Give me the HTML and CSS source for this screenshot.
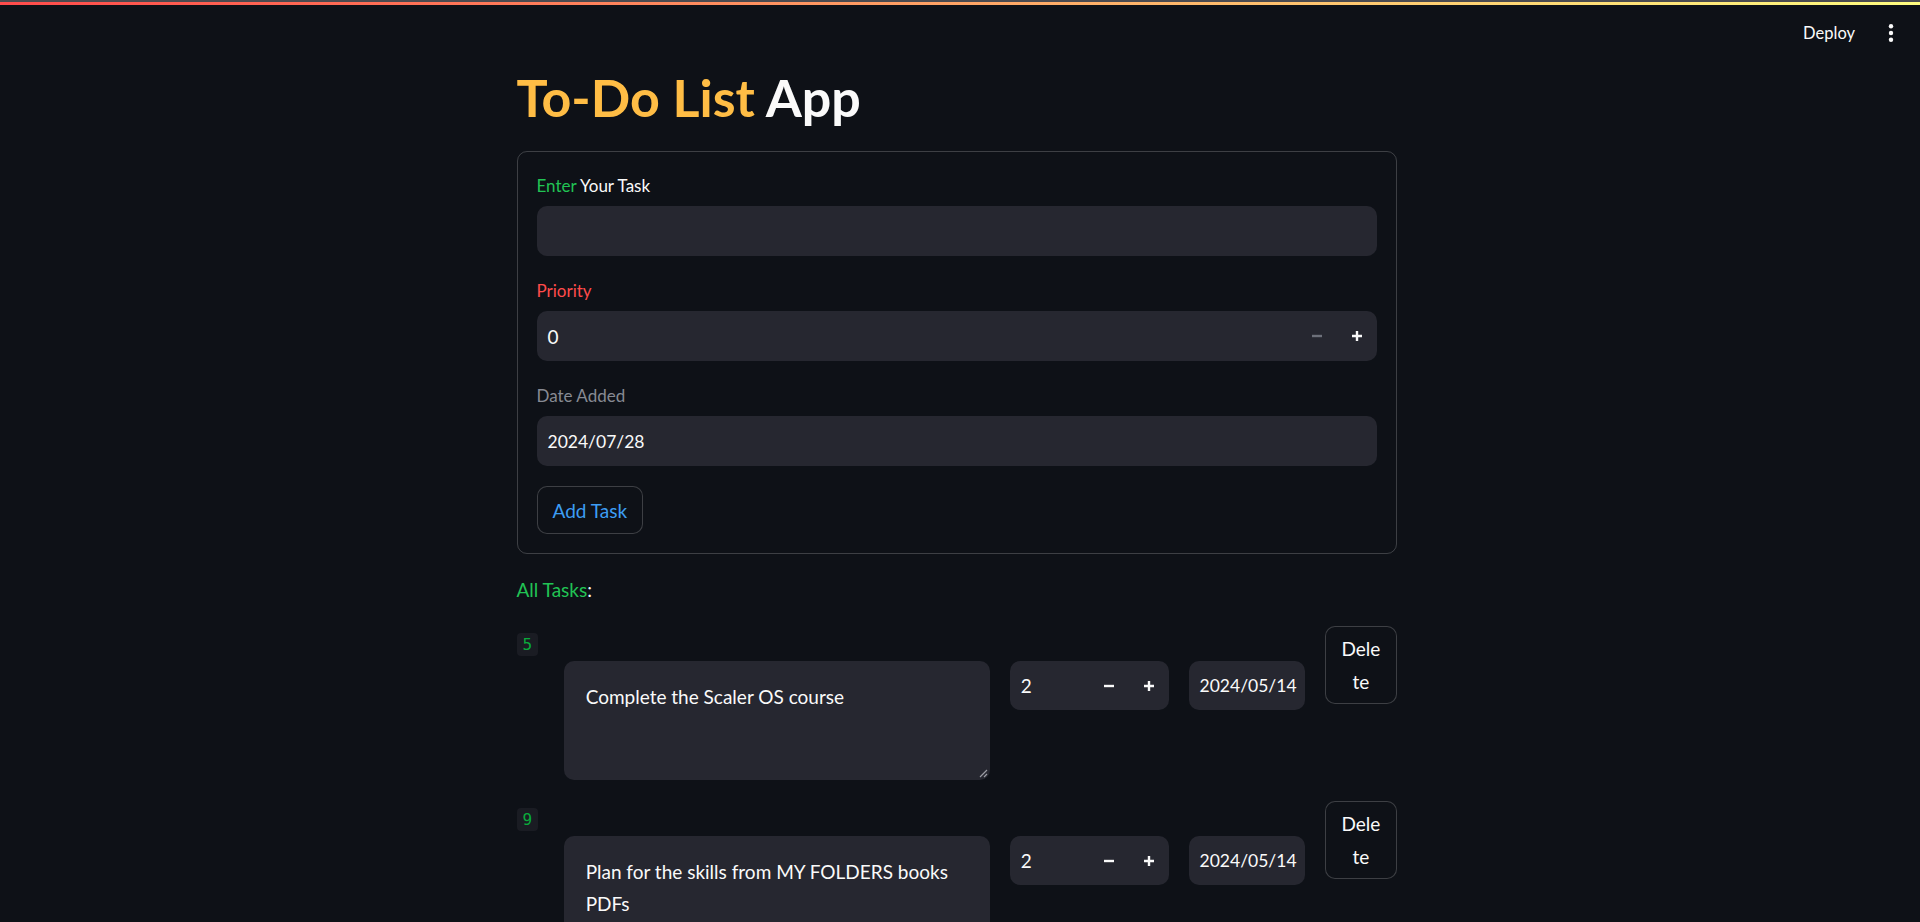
FILE: index.html
```html
<!DOCTYPE html>
<html lang="en">
<head>
<meta charset="utf-8">
<title>To-Do List App</title>
<link rel="stylesheet" href="styles.css">
</head>
<body>
<div class="decoration"></div>
<header class="topbar">
  <span class="deploy">Deploy</span>
  <svg class="menu" width="6" height="20" viewBox="0 0 6 20" aria-hidden="true">
    <circle cx="3" cy="3.3" r="2.2"/>
    <circle cx="3" cy="10" r="2.2"/>
    <circle cx="3" cy="16.7" r="2.2"/>
  </svg>
</header>

<div class="page">
<main class="main">
  <h1 class="title"><span class="orange">To-Do List</span> App</h1>

  <section class="form">
    <div class="field">
      <div class="label"><span class="green">Enter</span> Your Task</div>
      <div class="input"></div>
    </div>
    <div class="field">
      <div class="label red">Priority</div>
      <div class="input stepper">
        <span class="value">0</span>
        <span class="step disabled"><svg width="10" height="10" viewBox="0 0 10 10"><path d="M0 5h10"/></svg></span>
        <span class="step"><svg width="10" height="10" viewBox="0 0 10 10"><path d="M0 5h10M5 0v10"/></svg></span>
      </div>
    </div>
    <div class="field">
      <div class="label gray">Date Added</div>
      <div class="input"><span class="value date">2024/07/28</span></div>
    </div>
    <div class="actions">
      <button class="btn blue">Add Task</button>
    </div>
  </section>

  <p class="heading"><span class="green">All Tasks</span>:</p>

  <div class="task-row">
    <div class="cell"><code class="idx">5</code></div>
    <div class="cell">
      <div class="hidden-label"></div>
      <div class="textarea">Complete the Scaler OS course
        <svg class="grip" width="10" height="10" viewBox="0 0 10 10"><path d="M9 2L2 9M9 6L6 9"/></svg>
      </div>
    </div>
    <div class="cell">
      <div class="hidden-label"></div>
      <div class="input stepper small">
        <span class="value">2</span>
        <span class="step"><svg width="10" height="10" viewBox="0 0 10 10"><path d="M0 5h10"/></svg></span>
        <span class="step"><svg width="10" height="10" viewBox="0 0 10 10"><path d="M0 5h10M5 0v10"/></svg></span>
      </div>
    </div>
    <div class="cell">
      <div class="hidden-label"></div>
      <div class="input small"><span class="value date">2024/05/14</span></div>
    </div>
    <div class="cell">
      <button class="btn delete">Dele<wbr>te</button>
    </div>
  </div>

  <div class="task-row">
    <div class="cell"><code class="idx">9</code></div>
    <div class="cell">
      <div class="hidden-label"></div>
      <div class="textarea">Plan for the skills from MY FOLDERS books<br>PDFs
        <svg class="grip" width="10" height="10" viewBox="0 0 10 10"><path d="M9 2L2 9M9 6L6 9"/></svg>
      </div>
    </div>
    <div class="cell">
      <div class="hidden-label"></div>
      <div class="input stepper small">
        <span class="value">2</span>
        <span class="step"><svg width="10" height="10" viewBox="0 0 10 10"><path d="M0 5h10"/></svg></span>
        <span class="step"><svg width="10" height="10" viewBox="0 0 10 10"><path d="M0 5h10M5 0v10"/></svg></span>
      </div>
    </div>
    <div class="cell">
      <div class="hidden-label"></div>
      <div class="input small"><span class="value date">2024/05/14</span></div>
    </div>
    <div class="cell">
      <button class="btn delete">Dele<wbr>te</button>
    </div>
  </div>
</main>
</div>
</body>
</html>
```

FILE: styles.css
```css
* { box-sizing: border-box; }

html, body {
  margin: 0;
  padding: 0;
  height: 100%;
  overflow: hidden;
  background: #0e1117;
  color: #fafafa;
  font-family: Lato, "Open Sans", sans-serif;
}

.decoration {
  height: 5px;
  border-top: 2px solid #4b4b50;
  background: linear-gradient(90deg, #ff4b4b, #fffd80);
}

.topbar {
  height: 56px;
  display: flex;
  justify-content: flex-end;
  align-items: center;
  gap: 33px;
  padding-right: 26px;
}

.deploy {
  font-size: 16.5px;
  color: #fafafa;
}

.menu { fill: #fafafa; }

.page {
  padding-right: 7px;
}

.main {
  width: 880px;
  margin: 0 auto;
}

.title {
  margin: 3px 0 21px;
  font-size: 52px;
  line-height: 66px;
  font-weight: 700;
  color: #fafafa;
}

.orange { color: #ffbd45; }
.green { color: #21c354; }
.red { color: #ff4b4b; }
.gray { color: #878a93; }
.blue { color: #3d9df3; }

.form {
  border: 1px solid rgba(250, 250, 250, 0.2);
  border-radius: 10px;
  padding: 19px;
  display: flex;
  flex-direction: column;
  gap: 20px;
}

.field {
  display: flex;
  flex-direction: column;
}

.label {
  height: 30px;
  line-height: 30px;
  margin-bottom: 5px;
  font-size: 17px;
}

.input {
  height: 50px;
  background: #262730;
  border-radius: 10px;
  display: flex;
  align-items: center;
  padding-left: 11px;
  font-size: 19px;
  color: #fafafa;
}

.input.small { height: 49px; }

.value.date { font-size: 17.5px; }

.stepper .value { flex: 1; }

.step {
  width: 40px;
  height: 100%;
  display: flex;
  align-items: center;
  justify-content: center;
}

.step svg {
  stroke: #fafafa;
  stroke-width: 2.4;
  fill: none;
}

.step.disabled svg { stroke: #6d707a; }

.actions { display: flex; }

.btn {
  font-family: inherit;
  background: #0e1117;
  border: 1px solid rgba(250, 250, 250, 0.2);
  border-radius: 10px;
  color: #fafafa;
  cursor: pointer;
}

.actions .btn {
  height: 48px;
  padding: 0 15px;
  font-size: 19px;
}

.actions .btn.blue { color: #3d9df3; }

.heading {
  margin: 20px 0 20px;
  font-size: 19px;
  line-height: 32px;
}

.task-row {
  display: grid;
  grid-template-columns: 27fr 424fr 158fr 116fr 71fr;
  gap: 20px;
  align-items: start;
  margin-bottom: 21px;
}

.cell { min-width: 0; }

.idx {
  display: inline-block;
  margin-top: 7px;
  padding: 3px 6px;
  border-radius: 4px;
  background: #1a1c23;
  color: #09ab3b;
  font-family: "DejaVu Sans Mono", "Liberation Mono", monospace;
  font-size: 16px;
  line-height: 17px;
}

.hidden-label {
  height: 35px;
}

.textarea {
  position: relative;
  height: 119px;
  background: #262730;
  border-radius: 10px;
  padding: 20px 20px 20px 22px;
  font-size: 19px;
  line-height: 32px;
  color: #fafafa;
}

.grip {
  position: absolute;
  right: 2px;
  bottom: 2px;
  stroke: #9a9ca3;
  stroke-width: 1.2;
  fill: none;
}

.delete {
  width: 100%;
  padding: 5px 14px;
  font-size: 19px;
  line-height: 33px;
  text-align: center;
}
```
